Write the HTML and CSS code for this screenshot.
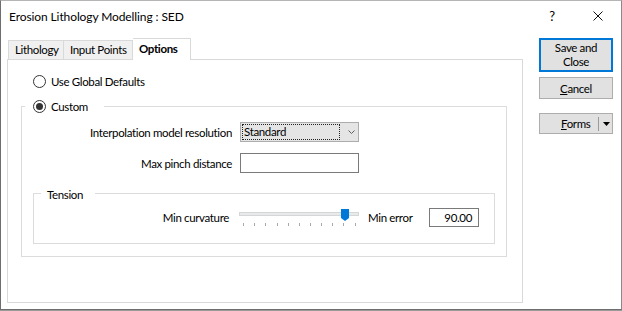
FILE: index.html
```html
<!DOCTYPE html>
<html>
<head>
<meta charset="utf-8">
<link rel="stylesheet" href="styles.css">
</head>
<body>
<div class="window">
  <div class="titlebar">
    <div class="title">Erosion Lithology Modelling : SED</div>
    <div class="tb-btn help">?</div>
    <div class="tb-btn close">
      <svg width="10" height="10" viewBox="0 0 10 10"><path d="M0.5 0.5 L9.5 9.5 M9.5 0.5 L0.5 9.5" stroke="#111" stroke-width="1" fill="none"/></svg>
    </div>
  </div>
  <div class="content">
    <div class="main">
      <div class="tabs">
        <div class="tab first">Lithology</div>
        <div class="tab second">Input Points</div>
        <div class="tab active">Options</div>
      </div>
      <div class="panel">
        <div class="radio-row top-radio">
          <span class="radio"></span>
          <span class="radio-label">Use Global Defaults</span>
        </div>
        <div class="group custom">
          <div class="legend custom-legend">
            <span class="radio checked"></span>
            <span class="radio-label">Custom</span>
          </div>
          <div class="form-row first-row">
            <span class="label">Interpolation model resolution</span>
            <div class="combo">
              <span class="combo-value">Standard</span>
              <svg class="chev" width="7" height="4" viewBox="0 0 7 4"><path d="M0.5 0.5 L3.5 3.5 L6.5 0.5" stroke="#606060" fill="none" stroke-width="1"/></svg>
            </div>
          </div>
          <div class="form-row second-row">
            <span class="label">Max pinch distance</span>
            <div class="textbox"></div>
          </div>
          <div class="group tension">
            <div class="legend tension-legend">Tension</div>
            <div class="tension-row">
              <span class="t-label">Min curvature</span>
              <svg class="slider" width="121" height="19" viewBox="0 0 121 19">
                <rect x="0.5" y="4.5" width="119" height="3" fill="#e7eaea" stroke="#d6d6d6"/>
                <g stroke="#a8a8a8" stroke-width="1">
                  <path d="M4.5 15 V18 M15.5 15 V18 M26.5 15 V18 M38.5 15 V18 M49.5 15 V18 M60.5 15 V18 M71.5 15 V18 M82.5 15 V18 M93.5 15 V18 M104.5 15 V18 M116.5 15 V18"/>
                </g>
                <path d="M102 1 H110 V10 L106 13 L102 10 Z" fill="#0078d7"/>
              </svg>
              <span class="e-label">Min error</span>
              <div class="valuebox">90.00</div>
            </div>
          </div>
        </div>
      </div>
    </div>
    <div class="side">
      <div class="btn default">Save and<br>Close</div>
      <div class="btn cancel"><span class="u">C</span>ancel</div>
      <div class="btn forms">
        <span class="forms-text"><span class="u">F</span>orms</span>
        <span class="sep"></span>
        <svg class="drop" width="7" height="4" viewBox="0 0 7 4"><path d="M0 0 H7 L3.5 4 Z" fill="#000"/></svg>
      </div>
    </div>
  </div>
</div>
</body>
</html>
```

FILE: styles.css
```css
* { box-sizing: border-box; }
html, body { margin: 0; padding: 0; }
body {
  width: 622px;
  height: 311px;
  background: #9a9a9a;
  font-family: Lato, "Noto Sans", sans-serif;
  font-size: 11.5px;
  letter-spacing: -0.35px;
  color: #000;
  overflow: hidden;
}
.window {
  width: 622px;
  height: 310px;
  background: #fff;
  border-top: 1px solid #b5b5b5;
  border-left: 1px solid #6e6e6e;
  border-right: 1px solid #8a8a8a;
  border-bottom: 1px solid #6e6e6e;
  display: flex;
  flex-direction: column;
}
.titlebar {
  height: 30px;
  display: flex;
  align-items: center;
}
.title {
  flex: 1;
  padding-left: 8px;
  font-size: 12px;
  letter-spacing: -0.1px;
}
.tb-btn {
  width: 46px;
  height: 30px;
  display: flex;
  align-items: center;
  justify-content: center;
}
.help { font-size: 13px; }
.content {
  display: flex;
  padding-top: 7px;
  padding-left: 6px;
}
.main {
  width: 516px;
  display: flex;
  flex-direction: column;
}
.tabs {
  display: flex;
  align-items: flex-end;
  height: 21px;
  padding-left: 1px;
}
.tab {
  height: 19px;
  border: 1px solid #d9d9d9;
  border-bottom: none;
  border-left: none;
  background: #f0f0f0;
  padding: 0 0 0 6px;
  line-height: 18px;
  white-space: nowrap;
  flex: none;
}
.tab.first { border-left: 1px solid #d9d9d9; width: 56px; }
.tab.second { width: 69px; }
.tab.active {
  height: 22px;
  width: 58px;
  background: #fff;
  font-weight: bold;
  margin-bottom: -1px;
  position: relative;
  z-index: 1;
  line-height: 20px;
  padding-left: 6px;
}
.panel {
  height: 244px;
  border: 1px solid #d9d9d9;
  background: #fff;
  padding-top: 15px;
}
.radio-row {
  display: flex;
  align-items: center;
  height: 13px;
}
.top-radio { margin-left: 25px; }
.radio {
  width: 13px;
  height: 13px;
  border: 1px solid #333;
  border-radius: 50%;
  background: #fff;
  display: inline-flex;
  align-items: center;
  justify-content: center;
  flex: none;
}
.radio.checked::after {
  content: "";
  width: 7px;
  height: 7px;
  border-radius: 50%;
  background: #333;
}
.radio-label { margin-left: 5px; }
.group {
  border: 1px solid #dcdcdc;
}
.custom {
  margin: 18px 15px 0 13px;
  height: 151px;
}
.legend {
  display: flex;
  align-items: center;
  background: #fff;
  width: max-content;
}
.custom-legend {
  height: 13px;
  margin-top: -7px;
  margin-left: 3px;
  padding: 0 16px 0 8px;
}
.form-row {
  display: flex;
  align-items: center;
  height: 20px;
}
.first-row { margin-top: 9px; }
.second-row { margin-top: 11px; }
.label {
  width: 210px;
  text-align: right;
  margin-right: 8px;
  white-space: nowrap;
}
.combo {
  width: 119px;
  height: 20px;
  border: 1px solid #adadad;
  background: #e5e5e5;
  display: flex;
  align-items: center;
  padding: 1px;
}
.combo-value {
  width: 98px;
  height: 16px;
  border: 1px dotted #222;
  line-height: 14px;
  padding-left: 1px;
}
.chev { margin-left: 8px; }
.textbox {
  width: 119px;
  height: 20px;
  border: 1px solid #7a7a7a;
  background: #fff;
}
.tension {
  margin: 20px 11px 0 11px;
  height: 51px;
}
.tension-legend {
  height: 16px;
  margin-top: -8px;
  margin-left: 7px;
  padding: 0 12px 0 6px;
}
.tension-row {
  display: flex;
  align-items: center;
  margin-top: 6px;
  height: 19px;
}
.t-label {
  width: 195px;
  text-align: right;
  margin-right: 10px;
  white-space: nowrap;
}
.slider { flex: none; }
.e-label {
  width: 61px;
  margin-left: 8px;
  white-space: nowrap;
}
.valuebox {
  width: 50px;
  height: 19px;
  border: 1px solid #7a7a7a;
  text-align: right;
  padding-right: 6px;
  line-height: 17px;
}
.side {
  width: 74px;
  margin-left: 16px;
  display: flex;
  flex-direction: column;
}
.btn {
  background: #e1e1e1;
  border: 1px solid #adadad;
  text-align: center;
  display: flex;
  align-items: center;
  justify-content: center;
  white-space: nowrap;
}
.default {
  height: 34px;
  border: 2px solid #0078d7;
  line-height: 14px;
}
.cancel {
  height: 22px;
  margin-top: 5px;
}
.forms {
  height: 21px;
  margin-top: 14px;
  justify-content: flex-start;
  padding-left: 21px;
}
.u { text-decoration: underline; }
.sep {
  width: 1px;
  height: 14px;
  background: #9a9a9a;
  margin-left: 8px;
}
.drop { margin-left: 4px; }
```
